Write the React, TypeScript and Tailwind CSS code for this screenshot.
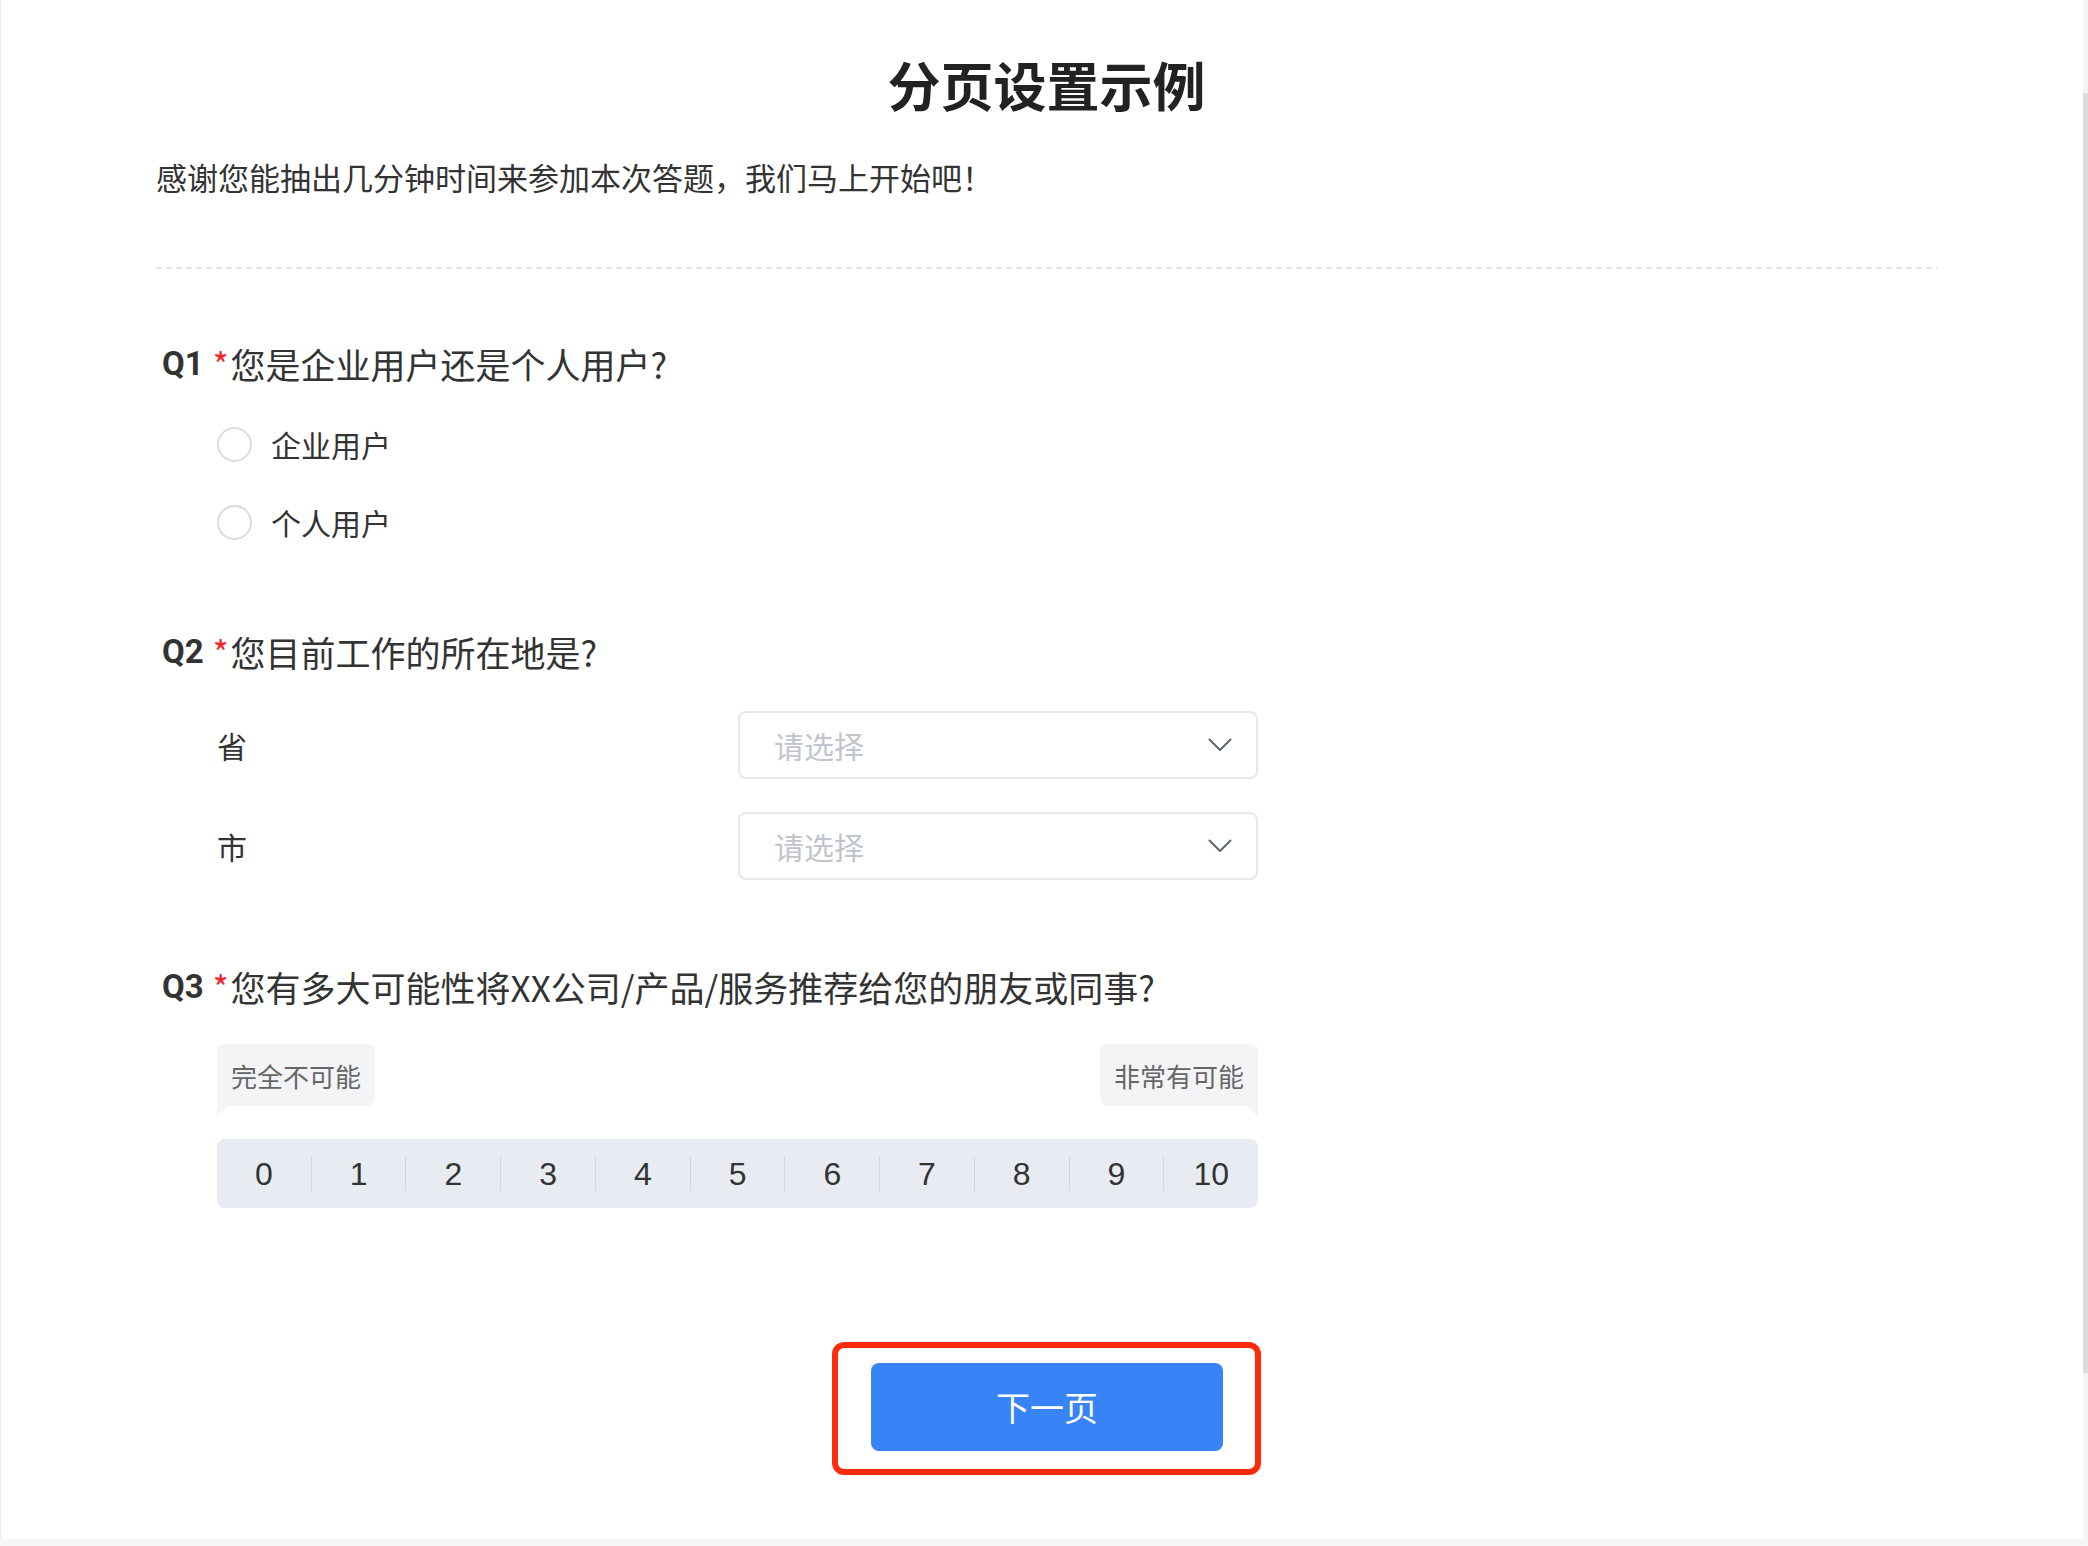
import React from "react";

function QTitle({ n, text, className }: { n: string; text: string; className?: string }) {
  return (
    <div className={"flex items-center h-[48px] pl-[6px] " + (className ?? "")}>
      <span className="font-['Roboto',sans-serif] font-bold text-[33px] leading-[48px] text-[#333]">{n}</span>
      <span className="ml-[9px] mr-[2px] text-[34px] leading-[48px] text-[#f5222d]">*</span>
      <span className="text-[35px] leading-[48px] text-[#333]">{text}</span>
    </div>
  );
}

function Radio({ label }: { label: string }) {
  return (
    <div className="flex items-center h-[78px]">
      <div className="w-[35px] h-[35px] rounded-full border-2 border-[#dcdcdc] bg-white" />
      <span className="ml-[19px] text-[30px] leading-[40px] text-[#333]">{label}</span>
    </div>
  );
}

function SelectRow({ label, className }: { label: string; className?: string }) {
  return (
    <div className={"ml-[61px] w-[1041px] flex items-center h-[68px] " + (className ?? "")}>
      <div className="w-[521px] text-[30px] leading-[40px] text-[#333]">{label}</div>
      <div className="w-[520px] h-[68px] border-2 border-[#ebe7e9] rounded-[8px] flex items-center justify-between pl-[34px] pr-[24px] bg-white">
        <span className="text-[30px] leading-[40px] text-[#c0c4cc]">请选择</span>
        <svg width="24" height="14" viewBox="0 0 24 14" fill="none">
          <path d="M1.5 1.5 L12 12 L22.5 1.5" stroke="#5b6670" strokeWidth="2" strokeLinejoin="round" strokeLinecap="round" />
        </svg>
      </div>
    </div>
  );
}

export default function App() {
  const nums = [0, 1, 2, 3, 4, 5, 6, 7, 8, 9, 10];
  return (
    <div className="w-[2088px] h-[1546px] bg-[#f5f6f8] flex flex-col overflow-hidden font-['Noto_Sans_CJK_SC','Noto_Sans',sans-serif] text-[#333]">
      <div className="flex h-[1539px]">
        <div className="flex-1 bg-white border-l border-[#ececec] flex flex-col">
          <main className="ml-[155px] w-[1781px] flex flex-col">
            <h1 className="pt-[50px] leading-[68px] text-[53px] font-bold text-center text-[#222]">分页设置示例</h1>
            <p className="mt-[39px] leading-[40px] text-[31px] text-[#333]">感谢您能抽出几分钟时间来参加本次答题，我们马上开始吧！</p>
            <div className="mt-[70px] h-[2px] bg-[repeating-linear-gradient(to_right,#e8e8e8_0,#e8e8e8_6px,transparent_6px,transparent_10px)]" />

            <QTitle n="Q1" text="您是企业用户还是个人用户?" className="mt-[71px]" />
            <div className="ml-[61px] mt-[17px] flex flex-col">
              <Radio label="企业用户" />
              <Radio label="个人用户" />
            </div>

            <QTitle n="Q2" text="您目前工作的所在地是?" className="mt-[67px]" />
            <SelectRow label="省" className="mt-[35px]" />
            <SelectRow label="市" className="mt-[33px]" />

            <QTitle n="Q3" text="您有多大可能性将XX公司/产品/服务推荐给您的朋友或同事?" className="mt-[83px]" />
            <div className="ml-[61px] mt-[33px] w-[1041px] flex justify-between">
              <div className="relative h-[62px] px-[14px] bg-[#f3f4f6] rounded-[8px] rounded-bl-none flex items-center text-[26px] text-[#666]">
                完全不可能
                <div className="absolute left-0 top-full w-0 h-0 border-t-[10px] border-t-[#f3f4f6] border-r-[11px] border-r-transparent" />
              </div>
              <div className="relative h-[62px] px-[14px] bg-[#f3f4f6] rounded-[8px] rounded-br-none flex items-center text-[26px] text-[#666]">
                非常有可能
                <div className="absolute right-0 top-full w-0 h-0 border-t-[10px] border-t-[#f3f4f6] border-l-[11px] border-l-transparent" />
              </div>
            </div>
            <div className="ml-[61px] mt-[33px] w-[1041px] h-[69px] bg-[#e8ecf2] rounded-[8px] flex items-center">
              {nums.map((n, i) => (
                <React.Fragment key={n}>
                  {i > 0 && <div className="w-px h-[35px] bg-[#d3d8de]" />}
                  <div className="flex-1 text-center font-['Liberation_Sans',sans-serif] text-[32px] leading-[40px] text-[#333]">{n}</div>
                </React.Fragment>
              ))}
            </div>

            <div className="mt-[134px] self-center border-[6px] border-[#ff2b0d] rounded-[12px] pt-[15px] pb-[18px] pl-[33px] pr-[32px]">
              <button className="w-[352px] h-[88px] bg-[#3784f7] rounded-[8px] text-white text-[34px] leading-[40px] flex items-center justify-center">
                下一页
              </button>
            </div>
          </main>
        </div>
        <div className="w-[5px] flex flex-col">
          <div className="h-[93px] bg-[#f4f4f4]" />
          <div className="h-[1280px] bg-[#dcdcdc]" />
          <div className="flex-1 bg-[#f4f4f4]" />
        </div>
      </div>
      <div className="flex-1 bg-[#f5f6f8]" />
    </div>
  );
}
